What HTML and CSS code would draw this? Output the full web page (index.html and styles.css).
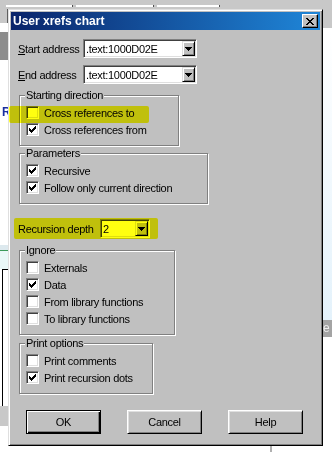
FILE: index.html
```html
<!DOCTYPE html>
<html lang="en">
<head>
  <meta charset="UTF-8" />
  <title>User xrefs chart</title>
  <link rel="stylesheet" href="styles.css">
</head>
<body>
  <!-- application behind the dialog -->
  <div class="app">
    <div class="app-top">
      <span class="tab tab-1"></span>
      <span class="tab tab-2"></span>
      <span class="tab tab-3"></span>
    </div>
    <div class="app-main">
      <div class="pane-left">
        <div class="lp-head"></div>
        <div class="lp-gap"></div>
        <div class="lp-dark"></div>
        <div class="lp-text">R</div>
        <div class="lp-band"></div>
        <div class="lp-line"></div>
        <div class="lp-cyan"></div>
        <div class="lp-box"></div>
        <div class="lp-foot"></div>
      </div>
      <div class="pane-center">
        <div class="cp-fill"></div>
        <div class="cp-bottom"><span class="vline"></span></div>
      </div>
      <div class="pane-right">
        <div class="rp-head"></div>
        <div class="rp-list"></div>
        <div class="rp-band">e</div>
      </div>
    </div>
  </div>

  <!-- dialog window -->
  <div class="dialog">
    <div class="titlebar">
      <span class="title">User xrefs chart</span>
      <span class="close-btn">
        <svg width="8" height="7" viewBox="0 0 8 7" shape-rendering="crispEdges"><path d="M0 0h2v1H0z M6 0h2v1H6z M1 1h2v1H1z M5 1h2v1H5z M2 2h4v1H2z M3 3h2v1H3z M2 4h4v1H2z M1 5h2v1H1z M5 5h2v1H5z M0 6h2v1H0z M6 6h2v1H6z" fill="#000"/></svg>
      </span>
    </div>

    <div class="dialog-body">
      <div class="field-row">
        <label class="field-label"><u>S</u>tart address</label>
        <div class="combo combo-wide">
          <span class="combo-text">.text:1000D02E</span>
          <span class="combo-btn"><svg width="7" height="4" viewBox="0 0 7 4" shape-rendering="crispEdges"><path d="M0 0h7v1H0z M1 1h5v1H1z M2 2h3v1H2z M3 3h1v1H3z" fill="#000"/></svg></span>
        </div>
      </div>
      <div class="field-row">
        <label class="field-label"><u>E</u>nd address</label>
        <div class="combo combo-wide">
          <span class="combo-text">.text:1000D02E</span>
          <span class="combo-btn"><svg width="7" height="4" viewBox="0 0 7 4" shape-rendering="crispEdges"><path d="M0 0h7v1H0z M1 1h5v1H1z M2 2h3v1H2z M3 3h1v1H3z" fill="#000"/></svg></span>
        </div>
      </div>

      <div class="group group-direction">
        <span class="group-title">Starting direction</span>
        <div class="check-row"><span class="check"></span>Cross references to</div>
        <div class="check-row"><span class="check on"></span>Cross references from</div>
      </div>

      <div class="group group-params">
        <span class="group-title">Parameters</span>
        <div class="check-row"><span class="check on"></span>Recursive</div>
        <div class="check-row"><span class="check on"></span>Follow only current direction</div>
      </div>

      <div class="field-row depth-row">
        <label class="field-label label-depth">Recursion depth</label>
        <div class="combo combo-depth">
          <span class="combo-text">2</span>
          <span class="combo-btn"><svg width="7" height="4" viewBox="0 0 7 4" shape-rendering="crispEdges"><path d="M0 0h7v1H0z M1 1h5v1H1z M2 2h3v1H2z M3 3h1v1H3z" fill="#000"/></svg></span>
        </div>
      </div>

      <div class="group group-ignore">
        <span class="group-title">Ignore</span>
        <div class="check-row"><span class="check"></span>Externals</div>
        <div class="check-row"><span class="check on"></span>Data</div>
        <div class="check-row"><span class="check"></span>From library functions</div>
        <div class="check-row"><span class="check"></span>To library functions</div>
      </div>

      <div class="group group-print">
        <span class="group-title">Print options</span>
        <div class="check-row"><span class="check"></span>Print comments</div>
        <div class="check-row"><span class="check on"></span>Print recursion dots</div>
      </div>

      <div class="buttons">
        <span class="btn btn-default">OK</span>
        <span class="btn">Cancel</span>
        <span class="btn">Help</span>
      </div>
    </div>

    <!-- highlighter marks drawn over the dialog -->
    <span class="marker marker-xref"></span>
    <span class="marker marker-depth"></span>
  </div>
</body>
</html>
```

FILE: styles.css
```css
body {
  margin: 0;
  width: 332px;
  height: 452px;
  overflow: hidden;
  position: relative;
  font-family: 'Liberation Sans', Arial, sans-serif;
  font-size: 11px;
  letter-spacing: -0.3px;
  color: #000;
  background: #fff;
}

/* Background application */
.app {
  width: 332px;
  height: 452px;
  display: flex;
  flex-direction: column;
}
.app-top {
  height: 9px;
  flex: none;
  background: #c8c8c8;
  display: flex;
  gap: 3px;
  padding: 5px 0 0 6px;
  box-sizing: border-box;
}
.tab { height: 2px; background: #fff; border-right: 1px solid #505050; }
.tab-1 { width: 66px; }
.tab-2 { width: 77px; }
.tab-3 { width: 62px; }
.app-main { flex: 1; display: flex; }

.pane-left { width: 8px; display: flex; flex-direction: column; }
.lp-head { height: 14px; background: #c8c8c8; border-right: 1px solid #606060; box-sizing: border-box; }
.lp-gap { height: 9px; }
.lp-dark { height: 28px; background: #8c8c8c; }
.lp-text {
  height: 185px;
  box-sizing: border-box;
  padding: 45px 0 0 2px;
  color: #1a2fa0;
  font-weight: bold;
  font-size: 12px;
}
.lp-band { height: 5px; background: #dde9ee; }
.lp-line { height: 1px; background: #3c9a5a; }
.lp-cyan { height: 18px; background: #eaf8f8; }
.lp-box {
  height: 137px;
  box-sizing: border-box;
  margin-left: 2px;
  border-top: 1px solid #000;
  border-left: 1px solid #000;
}
.lp-foot { height: 20px; background: #c8c8c8; }

.pane-center { flex: 1; display: flex; flex-direction: column; }
.cp-fill { flex: 1; }
.cp-bottom { height: 12px; }
.vline { display: block; width: 2px; height: 12px; margin-left: 262px; background: #b0b0b0; }

.pane-right { width: 9px; display: flex; flex-direction: column; }
.rp-head { height: 19px; background: #c8c8c8; }
.rp-list {
  height: 292px;
  border-top: 2px solid #fff;
  box-sizing: border-box;
  background: linear-gradient(#ffffff, #e4f2fb);
}
.rp-band {
  height: 17px;
  background: #a4a4a4;
  color: #eee;
  font-size: 12px;
  line-height: 17px;
}

/* Dialog window */
.dialog {
  position: absolute;
  left: 8px;
  top: 9px;
  width: 315px;
  height: 437px;
  box-sizing: border-box;
  padding: 2px;
  background: #c0c0c0;
  border: 1px solid;
  border-color: #dfdfdf #000 #000 #dfdfdf;
  box-shadow: inset 1px 1px 0 #fff, inset -1px -1px 0 #808080;
}
.titlebar {
  height: 18px;
  display: flex;
  align-items: center;
  justify-content: space-between;
  padding: 0 2px 0 2px;
  background: linear-gradient(to right, #0a246a, #1f86d8);
}
.title {
  color: #fff;
  font-weight: bold;
  font-size: 12px;
  letter-spacing: 0;
}
.close-btn {
  width: 16px;
  height: 14px;
  box-sizing: border-box;
  display: flex;
  align-items: center;
  justify-content: center;
  background: #c0c0c0;
  border: 1px solid;
  border-color: #fff #000 #000 #fff;
  box-shadow: inset -1px -1px 0 #808080;
}

.dialog-body { padding: 9px 0 0 7px; }

.field-row { display: flex; align-items: center; height: 19px; }
.field-row + .field-row { margin-top: 7px; }
.field-label { width: 65px; flex: none; }
.label-depth { width: 82px; }
.depth-row { margin-top: 15px; }

.combo {
  height: 19px;
  box-sizing: border-box;
  display: flex;
  align-items: center;
  justify-content: space-between;
  padding: 1px;
  background: #fff;
  border: 1px solid;
  border-color: #808080 #fff #fff #808080;
  box-shadow: inset 1px 1px 0 #404040, inset -1px -1px 0 #dfdfdf;
}
.combo-wide { width: 114px; }
.combo-depth { width: 50px; }
.combo-text { padding-left: 1px; }
.combo-btn {
  width: 13px;
  height: 15px;
  box-sizing: border-box;
  display: flex;
  align-items: center;
  justify-content: center;
  background: #c0c0c0;
  border: 1px solid;
  border-color: #dfdfdf #000 #000 #dfdfdf;
  box-shadow: inset 1px 1px 0 #fff, inset -1px -1px 0 #808080;
}

/* Group boxes */
.group {
  margin: 11px 0 0 1px;
  padding: 0 0 7px 6px;
  border: 1px solid #808080;
  box-shadow: 1px 1px 0 #fff, inset 1px 1px 0 #fff;
  box-sizing: border-box;
}
.group-direction { width: 160px; }
.group-params { width: 189px; margin-top: 7px; }
.group-ignore { width: 156px; margin-top: 12px; }
.group-print { width: 134px; margin-top: 8px; }
.group-title {
  display: block;
  width: max-content;
  margin: -7px 0 2px -1px;
  padding: 0 1px;
  line-height: 13px;
  background: #c0c0c0;
}

.check-row { display: flex; align-items: center; height: 17px; }
.check {
  width: 13px;
  height: 13px;
  flex: none;
  box-sizing: border-box;
  margin-right: 5px;
  background: #fff;
  border: 1px solid;
  border-color: #808080 #fff #fff #808080;
  box-shadow: inset 1px 1px 0 #404040, inset -1px -1px 0 #dfdfdf;
}
.check.on {
  background: #fff url("data:image/svg+xml,%3Csvg xmlns='http://www.w3.org/2000/svg' width='7' height='7' shape-rendering='crispEdges'%3E%3Cpath d='M0 2h1v3H0z M1 3h1v3H1z M2 4h1v3H2z M3 3h1v3H3z M4 2h1v3H4z M5 1h1v3H5z M6 0h1v3H6z'/%3E%3C/svg%3E") no-repeat 2px 2px;
}

/* Buttons */
.buttons { display: flex; gap: 26px; margin: 16px 0 0 8px; }
.btn {
  width: 75px;
  height: 24px;
  box-sizing: border-box;
  display: flex;
  align-items: center;
  justify-content: center;
  border: 1px solid;
  border-color: #fff #000 #000 #fff;
  box-shadow: inset 1px 1px 0 #dfdfdf, inset -1px -1px 0 #808080;
}
.btn-default {
  border-color: #000;
  box-shadow: inset 1px 1px 0 #fff, inset -1px -1px 0 #000, inset -2px -2px 0 #808080;
}

/* Highlighter marks */
.marker {
  position: absolute;
  background: #ffff10;
  mix-blend-mode: multiply;
  border-radius: 2px;
}
.marker-xref { left: 0; top: 96px; width: 140px; height: 17px; }
.marker-depth { left: 5px; top: 208px; width: 144px; height: 21px; }
```
